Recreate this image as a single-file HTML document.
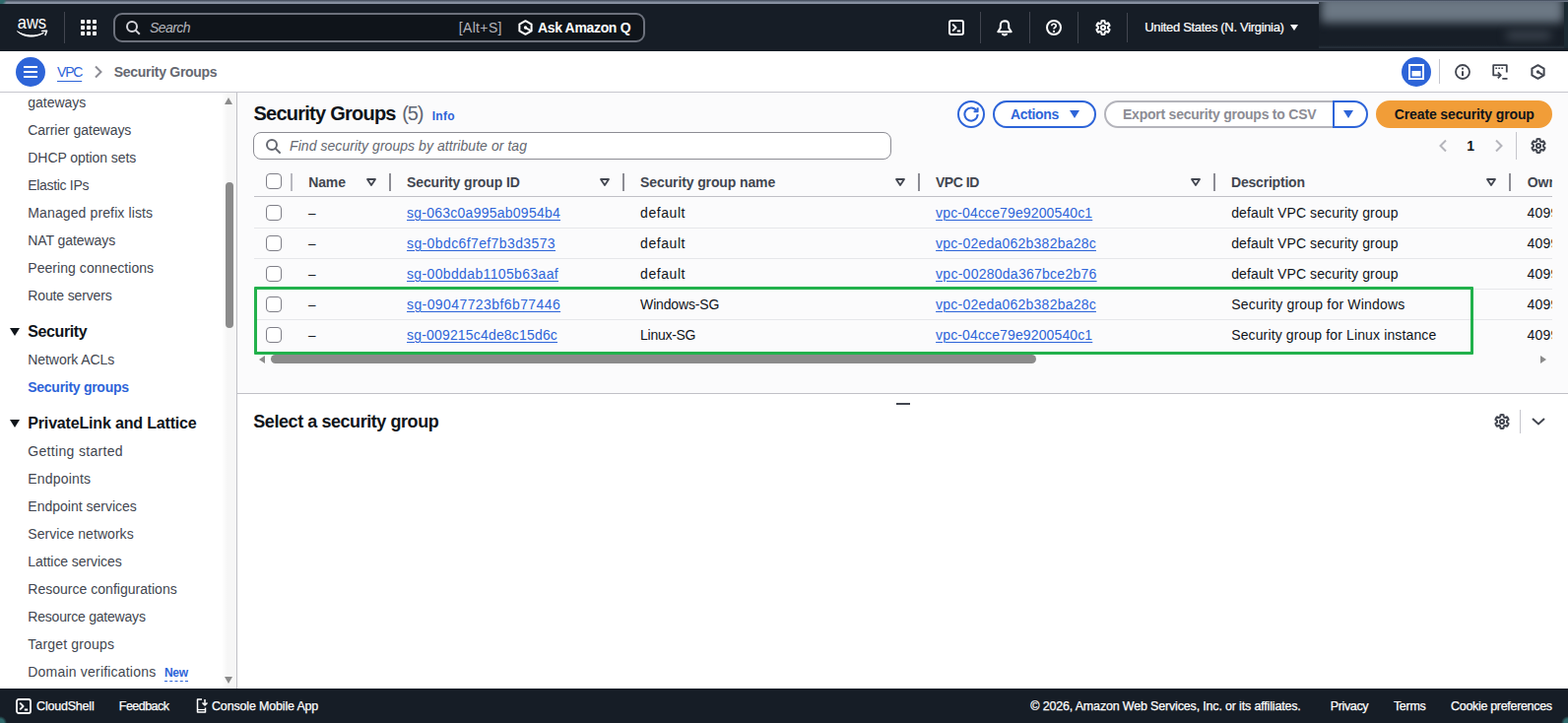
<!DOCTYPE html>
<html lang="en">
<head>
<meta charset="utf-8">
<title>Security Groups | VPC Console</title>
<style>
*{box-sizing:border-box;margin:0;padding:0}
html,body{width:1592px;height:734px;overflow:hidden;background:#fff}
body{font-family:"Liberation Sans",sans-serif;font-size:14px;color:#0f141a;position:relative}
.abs{position:absolute}
.t{position:absolute;white-space:nowrap;line-height:20px;height:20px}
svg{position:absolute;overflow:visible}
a{color:#2d64d8;text-decoration:underline;text-underline-offset:2px;text-decoration-thickness:1px}
#strip{left:0;top:0;width:1592px;height:4px;background:radial-gradient(circle at 0 0,#2f6a6c 0,#2f6a6c 4px,rgba(47,106,108,0) 7px),linear-gradient(#4b5565 0,#4b5565 30%,#8690a0 45%,#8690a0 100%)}
#nav{left:0;top:0;width:1592px;height:52px;background:#161d26;color:#fff}
.nd{position:absolute;top:12px;width:1px;height:32px;background:#424650}
#gsearch{left:115px;top:13px;width:540px;height:30px;border:2px solid #6c717c;border-radius:9px;background:#0f141a}
#acct{left:1339px;top:2px;width:253px;height:47px;background:linear-gradient(#171e27 0,#171e27 44px,#262f39 46px);overflow:hidden}
#acct b{position:absolute;right:0;top:0;width:4px;height:47px;background:#1b2a33}
#acct i{position:absolute;display:block;filter:blur(5px);border-radius:4px}
#crumb{left:0;top:52px;width:1592px;height:42px;background:#fff;border-bottom:1px solid #c6c6cd}
.circ{position:absolute;top:6px;width:30px;height:30px;border-radius:50%;background:#2d64d8}
#side{left:0;top:94px;width:241px;height:605px;background:#fff;border-right:1px solid #c0c0c6;overflow:hidden}
#side .t{color:#424650}
#track{left:225px;top:0;width:15px;height:605px;background:linear-gradient(90deg,#fff,#f6f6f6 40%)}
#thumb{left:229px;top:91px;width:8px;height:148px;background:#8b8b8b;border-radius:4px}
#main{left:241px;top:94px;width:1351px;height:305px;background:#fbfbfc;overflow:hidden}
.btn{position:absolute;top:8px;height:28px;border-radius:14px;border:2px solid #2d64d8;background:#fff}
.cb{position:absolute;width:16px;height:16px;border:1px solid #7f7f88;border-radius:4px;background:#fff}
.hd{position:absolute;width:2px;height:18px;background:#8c8c94}
.rb{position:absolute;left:0;width:1318px;height:1px;background:#e6e7ea}
#clip{left:17px;top:72px;width:1318px;height:196px;overflow:hidden}
#panel{left:241px;top:399px;width:1351px;height:300px;background:#fff;box-shadow:inset 0 1px 0 #c0c0c6}
#foot{left:0;top:699px;width:1592px;height:35px;background:radial-gradient(circle at 0 100%,#2f6a6c 0,#2f6a6c 4px,rgba(47,106,108,0) 7px),radial-gradient(circle at 100% 100%,#2f6a6c 0,#2f6a6c 4px,rgba(47,106,108,0) 7px),#161d26;color:#fff}
#foot .t{-webkit-text-stroke:.25px #fff}
</style>
</head>
<body>
<header id="nav" class="abs">
<div id="strip" class="abs"></div>
<svg style="left:17px;top:17px" width="32" height="22" viewBox="0 0 32 22"><text x="0.7" y="12" textLength="29.4" lengthAdjust="spacingAndGlyphs" font-family="Liberation Sans, sans-serif" font-size="17.9" fill="#fff">aws</text><path d="M0.5 14.8C8 19.8 19 20.3 27.3 16.4C18.5 21.8 7.5 21.3 0.5 14.8Z" fill="#fff" stroke="#fff" stroke-width="1" stroke-linejoin="round"/><path d="M25.8 14.6 30.6 14.2 29 18.6" fill="none" stroke="#fff" stroke-width="1.5" stroke-linejoin="round" stroke-linecap="round"/></svg>
<div class="nd" style="left:65px"></div>
<svg style="left:82px;top:20px" width="16" height="16" viewBox="0 0 16 16" fill="#fff"><rect x="0" y="0" width="4" height="4" rx=".9"/><rect x="6" y="0" width="4" height="4" rx=".9"/><rect x="12" y="0" width="4" height="4" rx=".9"/><rect x="0" y="6" width="4" height="4" rx=".9"/><rect x="6" y="6" width="4" height="4" rx=".9"/><rect x="12" y="6" width="4" height="4" rx=".9"/><rect x="0" y="12" width="4" height="4" rx=".9"/><rect x="6" y="12" width="4" height="4" rx=".9"/><rect x="12" y="12" width="4" height="4" rx=".9"/></svg>
<div id="gsearch" class="abs"></div>
<svg style="left:128px;top:21px" width="15" height="15" viewBox="0 0 15 15" fill="none" stroke="#d4d4da" stroke-width="2"><circle cx="6" cy="6" r="5"/><path d="M9.6 9.6 13.8 13.8"/></svg>
<span class="t" style="left:152px;top:18.15px;letter-spacing:-0.57px;font-style:italic;color:#b4b4bb;">Search</span>
<span class="t" style="left:465.7px;top:18.15px;letter-spacing:0.36px;color:#b4b4bb;">[Alt+S]</span>
<svg style="left:526px;top:20px" width="15" height="16" viewBox="0 0 15 16" fill="none" stroke="#fff" stroke-width="2" stroke-linejoin="round"><path d="M7.5 1.2 13.6 4.6v6.8L7.5 14.8 1.4 11.4V4.6Z"/><path d="M7.5 8 11.8 10.6" stroke-linecap="round"/><circle cx="7.5" cy="8" r="1.7" fill="#fff" stroke="none"/></svg>
<span class="t" style="left:545.9px;top:18.15px;letter-spacing:-0.33px;font-weight:700;color:#fff;">Ask Amazon Q</span>
<svg style="left:963px;top:20px" width="16" height="16" viewBox="0 0 16 16" fill="none" stroke="#fff" stroke-width="2" stroke-linejoin="round"><rect x="1" y="1" width="14" height="14" rx="2"/><path d="M4.2 4.6 7.6 8 4.2 11.4M8.8 11.5h3.4" stroke-width="1.8"/></svg>
<div class="nd" style="left:995px"></div>
<svg style="left:1012px;top:20px" width="16" height="16" viewBox="0 0 16 16" fill="none" stroke="#fff" stroke-width="2" stroke-linejoin="round" stroke-linecap="round"><path d="M8 1.2C5.5 1.2 3.8 3 3.8 5.5V8.3L1.3 12.2H14.7L12.2 8.3V5.5C12.2 3 10.5 1.2 8 1.2Z"/><path d="M6 14.8C7 15.5 9 15.5 10 14.8"/></svg>
<div class="nd" style="left:1045px"></div>
<svg style="left:1062px;top:20px" width="16" height="16" viewBox="0 0 16 16" fill="none" stroke="#fff" stroke-width="2"><circle cx="8" cy="8" r="7"/><path d="M5.8 6.3C5.8 3.6 10.2 3.6 10.2 6.2C10.2 7.8 8 7.8 8 9.6" stroke-width="1.7"/><circle cx="8" cy="11.9" r="1.1" fill="#fff" stroke="none"/></svg>
<div class="nd" style="left:1094px"></div>
<svg style="left:1112px;top:20px" width="16" height="16" viewBox="0 0 16 16" fill="none" stroke="#fff" stroke-width="2" stroke-linejoin="round"><path d="M9.79 3.33L9.55 1.28A6.9 6.9 0 0 0 6.45 1.28L6.21 3.33A5.0 5.0 0 0 0 4.85 4.11L2.95 3.29A6.9 6.9 0 0 0 1.40 5.98L3.06 7.22A5.0 5.0 0 0 0 3.06 8.78L1.40 10.02A6.9 6.9 0 0 0 2.95 12.71L4.85 11.89A5.0 5.0 0 0 0 6.21 12.67L6.45 14.72A6.9 6.9 0 0 0 9.55 14.72L9.79 12.67A5.0 5.0 0 0 0 11.15 11.89L13.05 12.71A6.9 6.9 0 0 0 14.60 10.02L12.94 8.78A5.0 5.0 0 0 0 12.94 7.22L14.60 5.98A6.9 6.9 0 0 0 13.05 3.29L11.15 4.11A5.0 5.0 0 0 0 9.79 3.33Z"/><circle cx="8" cy="8" r="2.1"/></svg>
<div class="nd" style="left:1144px;top:13px;height:30px"></div>
<span class="t" style="left:1162.2px;top:18.3px;font-size:13px;letter-spacing:-0.32px;color:#fff;-webkit-text-stroke:.2px #fff;">United States (N. Virginia)</span>
<div class="abs" style="left:1310px;top:25px;width:0;height:0;border-left:4.3px solid transparent;border-right:4.3px solid transparent;border-top:6.5px solid #fff"></div>
<div id="acct" class="abs"><i style="left:2px;top:-6px;width:246px;height:27px;background:#6c7884"></i><i style="left:190px;top:30px;width:46px;height:8px;background:#3f4752"></i><b></b></div>
</header>
<nav id="crumb" class="abs">
<div class="circ" style="left:16px"></div>
<div class="abs" style="left:24px;top:15px;width:14px;height:2px;background:#fff;box-shadow:0 5px 0 #fff,0 10px 0 #fff"></div>
<a class="t" style="left:58px;top:10.85px;letter-spacing:-1.2px;text-underline-offset:4px;">VPC</a>
<svg style="left:96px;top:15px" width="8" height="12" viewBox="0 0 8 12" fill="none" stroke="#8c8c94" stroke-width="2"><path d="M1 .5 6.5 6 1 11.5"/></svg>
<span class="t" style="left:115.8px;top:10.85px;letter-spacing:-0.29px;font-weight:700;color:#656871;">Security Groups</span>
<div class="circ" style="left:1423px"></div>
<svg style="left:1430px;top:13px" width="16" height="16" viewBox="0 0 16 16" fill="none" stroke="#fff" stroke-width="2" stroke-linejoin="round"><rect x="1" y="1" width="14" height="14" stroke-linejoin="miter"/><rect x="3.5" y="7" width="9" height="5.5" fill="#fff" stroke="none"/></svg>
<div class="abs" style="left:1461px;top:8px;width:1px;height:25px;background:#c6c6cd"></div>
<svg style="left:1477px;top:13px" width="16" height="16" viewBox="0 0 16 16" fill="none" stroke="#424650" stroke-width="1.8"><circle cx="8" cy="8" r="7"/><path d="M8 7.2V12" stroke-width="2"/><circle cx="8" cy="4.7" r="1.1" fill="#424650" stroke="none"/></svg>
<svg style="left:1515px;top:13px" width="16" height="16" viewBox="0 0 16 16" fill="none" stroke="#424650" stroke-width="1.8" stroke-linejoin="round"><path d="M8 11.3H1.2V1.2H14.8V8.5"/><path d="M3.3 4.3h1.8M6.3 4.3h1.8M9.3 4.3h1.8" stroke-width="1.6"/><path d="M5.8 8.3 8.8 11.3 5.8 14.3M10.3 14.8h5.2"/></svg>
<svg style="left:1553.5px;top:13px" width="15" height="16" viewBox="0 0 15 16" fill="none" stroke="#424650" stroke-width="2" stroke-linejoin="round"><path d="M7.5 1.2 13.6 4.6v6.8L7.5 14.8 1.4 11.4V4.6Z"/><path d="M7.5 8 11.8 10.6" stroke-linecap="round"/><circle cx="7.5" cy="8" r="1.7" fill="#424650" stroke="none"/></svg>
</nav>
<aside id="side" class="abs">
<div id="track" class="abs"></div><div id="thumb" class="abs"></div>
<div class="abs" style="left:228px;top:5px;width:0;height:0;border-left:4.5px solid transparent;border-right:4.5px solid transparent;border-bottom:7px solid #8b8b8b"></div>
<div class="abs" style="left:228px;top:593px;width:0;height:0;border-left:4.5px solid transparent;border-right:4.5px solid transparent;border-top:7px solid #8b8b8b"></div>
<span class="t" style="left:28.3px;top:0.35px;letter-spacing:-0.03px;">gateways</span>
<span class="t" style="left:28.3px;top:28.35px;letter-spacing:-0.05px;">Carrier gateways</span>
<span class="t" style="left:28.3px;top:56.35px;letter-spacing:-0.07px;">DHCP option sets</span>
<span class="t" style="left:28.3px;top:84.35px;letter-spacing:-0.32px;">Elastic IPs</span>
<span class="t" style="left:28.3px;top:112.35px;letter-spacing:0.12px;">Managed prefix lists</span>
<span class="t" style="left:28.3px;top:140.35px;letter-spacing:-0.07px;">NAT gateways</span>
<span class="t" style="left:28.3px;top:168.35px;letter-spacing:0.05px;">Peering connections</span>
<span class="t" style="left:28.3px;top:196.35px;letter-spacing:-0.14px;">Route servers</span>
<div class="abs" style="left:10px;top:239px;width:0;height:0;border-left:5px solid transparent;border-right:5px solid transparent;border-top:8.5px solid #0f141a"></div>
<span class="t" style="left:28.3px;top:232.86px;font-size:16px;letter-spacing:-0.39px;font-weight:700;color:#0f141a;">Security</span>
<span class="t" style="left:28.3px;top:261.45px;letter-spacing:-0.07px;">Network ACLs</span>
<span class="t" style="left:28.3px;top:289.35px;letter-spacing:-0.28px;font-weight:700;color:#2d64d8;">Security groups</span>
<div class="abs" style="left:10px;top:332px;width:0;height:0;border-left:5px solid transparent;border-right:5px solid transparent;border-top:8.5px solid #0f141a"></div>
<span class="t" style="left:28.3px;top:325.66px;font-size:16px;letter-spacing:-0.17px;font-weight:700;color:#0f141a;">PrivateLink and Lattice</span>
<span class="t" style="left:28.3px;top:354.35px;letter-spacing:0.32px;">Getting started</span>
<span class="t" style="left:28.3px;top:382.35px;letter-spacing:0.18px;">Endpoints</span>
<span class="t" style="left:28.3px;top:410.35px;">Endpoint services</span>
<span class="t" style="left:28.3px;top:438.35px;letter-spacing:0.05px;">Service networks</span>
<span class="t" style="left:28.3px;top:466.35px;letter-spacing:-0.07px;">Lattice services</span>
<span class="t" style="left:28.3px;top:494.35px;letter-spacing:0.02px;">Resource configurations</span>
<span class="t" style="left:28.3px;top:522.35px;letter-spacing:-0.21px;">Resource gateways</span>
<span class="t" style="left:28.3px;top:550.35px;letter-spacing:0.17px;">Target groups</span>
<span class="t" style="left:28.3px;top:578.35px;letter-spacing:0.2px;">Domain verifications</span>
<span class="t" style="left:167px;top:578.64px;font-size:12px;letter-spacing:-0.34px;font-weight:700;color:#2d64d8;border-bottom:1px dashed #2d64d8;height:19px;">New</span>
</aside>
<main id="main" class="abs">
<span class="t" style="left:16.5px;top:9.37px;font-size:20px;letter-spacing:-0.76px;line-height:24px;height:24px;font-weight:700;">Security Groups</span>
<span class="t" style="left:167.3px;top:9.37px;font-size:20px;letter-spacing:-1.2px;line-height:24px;height:24px;color:#5f6673;">(5)</span>
<span class="t" style="left:197.7px;top:13.84px;font-size:12px;letter-spacing:0.27px;font-weight:700;color:#2d64d8;">Info</span>
<div class="btn" style="left:731px;width:28px"></div>
<svg style="left:737px;top:14px" width="16" height="16" viewBox="0 0 16 16" fill="none" stroke="#2d64d8" stroke-width="2" stroke-linejoin="round"><path d="M14.6 8A6.6 6.6 0 1 1 13.6 4.5"/><path d="M14.6 1.200V5.200H10.6"/></svg>
<div class="btn" style="left:767px;width:105px"></div>
<span class="t" style="left:785px;top:11.85px;letter-spacing:-0.34px;font-weight:700;color:#2d64d8;">Actions</span>
<div class="abs" style="left:845px;top:18.4px;width:0;height:0;border-left:5px solid transparent;border-right:5px solid transparent;border-top:8px solid #2d64d8"></div>
<div class="btn" style="left:880px;width:234px;border-color:#b4b4bb;border-radius:14px 0 0 14px"></div>
<span class="t" style="left:899px;top:11.85px;letter-spacing:-0.23px;font-weight:700;color:#8c8c94;">Export security groups to CSV</span>
<div class="btn" style="left:1112px;width:36px;border-radius:0 14px 14px 0"></div>
<div class="abs" style="left:1123.2px;top:18.4px;width:0;height:0;border-left:5px solid transparent;border-right:5px solid transparent;border-top:8px solid #2d64d8"></div>
<div class="btn" style="left:1156px;width:179px;border-color:#f19d38;background:#f19d38"></div>
<span class="t" style="left:1174.8px;top:11.85px;letter-spacing:-0.13px;font-weight:700;color:#0f141a;">Create security group</span>
<div class="abs" style="left:16px;top:40px;width:648px;height:28px;border:1px solid #8c8c94;border-radius:8px;background:#fff"></div>
<svg style="left:29px;top:47px" width="15" height="15" viewBox="0 0 15 15" fill="none" stroke="#656871" stroke-width="2"><circle cx="6" cy="6" r="5"/><path d="M9.6 9.6 14 14" stroke-linecap="round"/></svg>
<span class="t" style="left:53.1px;top:44.45px;letter-spacing:0.05px;font-style:italic;color:#656871;">Find security groups by attribute or tag</span>
<svg style="left:1220px;top:48px" width="8" height="12" viewBox="0 0 8 12" fill="none" stroke="#b4b4bb" stroke-width="2"><path d="M7 .5 1.5 6 7 11.5"/></svg>
<span class="t" style="left:1248.3px;top:44.15px;font-weight:700;color:#0f141a;">1</span>
<svg style="left:1276.5px;top:48px" width="8" height="12" viewBox="0 0 8 12" fill="none" stroke="#b4b4bb" stroke-width="2"><path d="M1 .5 6.5 6 1 11.5"/></svg>
<div class="abs" style="left:1298px;top:40px;width:1px;height:28px;background:#c6c6cd"></div>
<svg style="left:1313px;top:46px" width="16" height="16" viewBox="0 0 16 16" fill="none" stroke="#424650" stroke-width="2" stroke-linejoin="round"><path d="M9.79 3.33L9.55 1.28A6.9 6.9 0 0 0 6.45 1.28L6.21 3.33A5.0 5.0 0 0 0 4.85 4.11L2.95 3.29A6.9 6.9 0 0 0 1.40 5.98L3.06 7.22A5.0 5.0 0 0 0 3.06 8.78L1.40 10.02A6.9 6.9 0 0 0 2.95 12.71L4.85 11.89A5.0 5.0 0 0 0 6.21 12.67L6.45 14.72A6.9 6.9 0 0 0 9.55 14.72L9.79 12.67A5.0 5.0 0 0 0 11.15 11.89L13.05 12.71A6.9 6.9 0 0 0 14.60 10.02L12.94 8.78A5.0 5.0 0 0 0 12.94 7.22L14.60 5.98A6.9 6.9 0 0 0 13.05 3.29L11.15 4.11A5.0 5.0 0 0 0 9.79 3.33Z"/><circle cx="8" cy="8" r="2.1"/></svg>
<div id="clip" class="abs">
<div class="cb" style="left:12px;top:10px"></div>
<span class="t" style="left:55.2px;top:8.95px;letter-spacing:-0.11px;font-weight:700;color:#424650;">Name</span>
<svg style="left:114px;top:15.3px" width="10" height="8" viewBox="0 0 10 8" fill="none" stroke="#424650" stroke-width="1.8" stroke-linejoin="round"><path d="M1 1h8L5 7Z"/></svg>
<span class="t" style="left:155px;top:8.95px;letter-spacing:-0.12px;font-weight:700;color:#424650;">Security group ID</span>
<svg style="left:351px;top:15.3px" width="10" height="8" viewBox="0 0 10 8" fill="none" stroke="#424650" stroke-width="1.8" stroke-linejoin="round"><path d="M1 1h8L5 7Z"/></svg>
<span class="t" style="left:392.1px;top:8.95px;letter-spacing:-0.12px;font-weight:700;color:#424650;">Security group name</span>
<svg style="left:650.8px;top:15.3px" width="10" height="8" viewBox="0 0 10 8" fill="none" stroke="#424650" stroke-width="1.8" stroke-linejoin="round"><path d="M1 1h8L5 7Z"/></svg>
<span class="t" style="left:692px;top:8.95px;letter-spacing:-0.48px;font-weight:700;color:#424650;">VPC ID</span>
<svg style="left:950.8px;top:15.3px" width="10" height="8" viewBox="0 0 10 8" fill="none" stroke="#424650" stroke-width="1.8" stroke-linejoin="round"><path d="M1 1h8L5 7Z"/></svg>
<span class="t" style="left:992px;top:8.95px;letter-spacing:-0.2px;font-weight:700;color:#424650;">Description</span>
<svg style="left:1251px;top:15.3px" width="10" height="8" viewBox="0 0 10 8" fill="none" stroke="#424650" stroke-width="1.8" stroke-linejoin="round"><path d="M1 1h8L5 7Z"/></svg>
<span class="t" style="left:1292.7px;top:8.95px;font-weight:700;color:#424650;">Owner</span>
<div class="hd" style="left:37px;top:10px;background:#b9b9c0"></div>
<div class="hd" style="left:137px;top:10px"></div>
<div class="hd" style="left:374px;top:10px"></div>
<div class="hd" style="left:674px;top:10px"></div>
<div class="hd" style="left:974px;top:10px"></div>
<div class="hd" style="left:1274px;top:10px"></div>
<div class="rb" style="top:33px;background:#c0c0c6"></div>
<div class="cb" style="left:12px;top:42px"></div>
<span class="t" style="left:55.2px;top:41.33px;font-size:12.6px;-webkit-text-stroke:.3px #0f141a;">–</span>
<a class="t" style="left:155px;top:39.85px;letter-spacing:0.25px;">sg-063c0a995ab0954b4</a>
<span class="t" style="left:392.1px;top:39.85px;letter-spacing:0.56px;">default</span>
<a class="t" style="left:692.1px;top:39.85px;letter-spacing:0.13px;">vpc-04cce79e9200540c1</a>
<span class="t" style="left:992.2px;top:39.85px;letter-spacing:0.11px;">default VPC security group</span>
<span class="t" style="left:1292.4px;top:39.85px;letter-spacing:.25px;">4099</span>
<div class="rb" style="top:65px"></div>
<div class="cb" style="left:12px;top:73px"></div>
<span class="t" style="left:55.2px;top:72.33px;font-size:12.6px;-webkit-text-stroke:.3px #0f141a;">–</span>
<a class="t" style="left:155px;top:70.85px;letter-spacing:0.39px;">sg-0bdc6f7ef7b3d3573</a>
<span class="t" style="left:392.1px;top:70.85px;letter-spacing:0.56px;">default</span>
<a class="t" style="left:692.1px;top:70.85px;letter-spacing:0.23px;">vpc-02eda062b382ba28c</a>
<span class="t" style="left:992.2px;top:70.85px;letter-spacing:0.11px;">default VPC security group</span>
<span class="t" style="left:1292.4px;top:70.85px;letter-spacing:.25px;">4099</span>
<div class="rb" style="top:96px"></div>
<div class="cb" style="left:12px;top:104px"></div>
<span class="t" style="left:55.2px;top:103.33px;font-size:12.6px;-webkit-text-stroke:.3px #0f141a;">–</span>
<a class="t" style="left:155px;top:101.85px;letter-spacing:0.36px;">sg-00bddab1105b63aaf</a>
<span class="t" style="left:392.1px;top:101.85px;letter-spacing:0.56px;">default</span>
<a class="t" style="left:692.1px;top:101.85px;letter-spacing:0.26px;">vpc-00280da367bce2b76</a>
<span class="t" style="left:992.2px;top:101.85px;letter-spacing:0.11px;">default VPC security group</span>
<span class="t" style="left:1292.4px;top:101.85px;letter-spacing:.25px;">4099</span>
<div class="rb" style="top:127px"></div>
<div class="cb" style="left:12px;top:135px"></div>
<span class="t" style="left:55.2px;top:134.33px;font-size:12.6px;-webkit-text-stroke:.3px #0f141a;">–</span>
<a class="t" style="left:155px;top:132.85px;letter-spacing:0.41px;">sg-09047723bf6b77446</a>
<span class="t" style="left:392.1px;top:132.85px;letter-spacing:-0.16px;">Windows-SG</span>
<a class="t" style="left:692.1px;top:132.85px;letter-spacing:0.23px;">vpc-02eda062b382ba28c</a>
<span class="t" style="left:992.2px;top:132.85px;letter-spacing:0.2px;">Security group for Windows</span>
<span class="t" style="left:1292.4px;top:132.85px;letter-spacing:.25px;">4099</span>
<div class="rb" style="top:158px"></div>
<div class="cb" style="left:12px;top:166px"></div>
<span class="t" style="left:55.2px;top:165.33px;font-size:12.6px;-webkit-text-stroke:.3px #0f141a;">–</span>
<a class="t" style="left:155px;top:163.85px;letter-spacing:0.18px;">sg-009215c4de8c15d6c</a>
<span class="t" style="left:392.1px;top:163.85px;letter-spacing:-0.28px;">Linux-SG</span>
<a class="t" style="left:692.1px;top:163.85px;letter-spacing:0.13px;">vpc-04cce79e9200540c1</a>
<span class="t" style="left:992.2px;top:163.85px;letter-spacing:0.13px;">Security group for Linux instance</span>
<span class="t" style="left:1292.4px;top:163.85px;letter-spacing:.25px;">4099</span>
</div>
<div class="abs" style="left:17px;top:197px;width:1238px;height:69px;border:3px solid #22b14c;border-radius:1px"></div>
<div class="abs" style="left:22px;top:266.5px;width:0;height:0;border-top:4.5px solid transparent;border-bottom:4.5px solid transparent;border-right:6px solid #8b8b8b"></div>
<div class="abs" style="left:34px;top:266px;width:777px;height:9px;border-radius:4.5px;background:#8b8b8b"></div>
<div class="abs" style="left:1323px;top:266.5px;width:0;height:0;border-top:4.5px solid transparent;border-bottom:4.5px solid transparent;border-left:6px solid #8b8b8b"></div>
</main>
<section id="panel" class="abs">
<div class="abs" style="left:669px;top:10px;width:14px;height:2px;background:#424650"></div>
<span class="t" style="left:16.3px;top:17.76px;font-size:18px;letter-spacing:-0.44px;line-height:22px;height:22px;font-weight:700;">Select a security group</span>
<svg style="left:1276px;top:21px" width="16" height="16" viewBox="0 0 16 16" fill="none" stroke="#424650" stroke-width="2" stroke-linejoin="round"><path d="M9.79 3.33L9.55 1.28A6.9 6.9 0 0 0 6.45 1.28L6.21 3.33A5.0 5.0 0 0 0 4.85 4.11L2.95 3.29A6.9 6.9 0 0 0 1.40 5.98L3.06 7.22A5.0 5.0 0 0 0 3.06 8.78L1.40 10.02A6.9 6.9 0 0 0 2.95 12.71L4.85 11.89A5.0 5.0 0 0 0 6.21 12.67L6.45 14.72A6.9 6.9 0 0 0 9.55 14.72L9.79 12.67A5.0 5.0 0 0 0 11.15 11.89L13.05 12.71A6.9 6.9 0 0 0 14.60 10.02L12.94 8.78A5.0 5.0 0 0 0 12.94 7.22L14.60 5.98A6.9 6.9 0 0 0 13.05 3.29L11.15 4.11A5.0 5.0 0 0 0 9.79 3.33Z"/><circle cx="8" cy="8" r="2.1"/></svg>
<div class="abs" style="left:1302px;top:17px;width:1px;height:24px;background:#c6c6cd"></div>
<svg style="left:1314px;top:25px" width="14" height="8" viewBox="0 0 14 8" fill="none" stroke="#424650" stroke-width="2"><path d="M1 1 7 6.5 13 1"/></svg>
</section>
<footer id="foot" class="abs">
<svg style="left:16px;top:10px" width="16" height="16" viewBox="0 0 16 16" fill="none" stroke="#fff" stroke-width="1.8" stroke-linejoin="round"><rect x="1" y="1" width="14" height="14" rx="2"/><path d="M4.2 4.6 7.6 8 4.2 11.4M8.8 11.5h3.4" stroke-width="1.8"/></svg>
<span class="t" style="left:37.1px;top:8.07px;font-size:12.5px;letter-spacing:-0.21px;">CloudShell</span>
<span class="t" style="left:120.8px;top:8.07px;font-size:12.5px;letter-spacing:-0.53px;">Feedback</span>
<svg style="left:198.5px;top:9.5px" width="12" height="15" viewBox="0 0 12 15" fill="none" stroke="#fff" stroke-width="1.5" stroke-linejoin="round"><path d="M6 1H1.5V14H9.5V9.5"/><path d="M1.5 11.5H9.5" stroke-width="1.2"/><path d="M9 1V6.5M6.5 4.5 9 7 11.5 4.5"/></svg>
<span class="t" style="left:215px;top:8.07px;font-size:12.5px;letter-spacing:-0.17px;">Console Mobile App</span>
<span class="t" style="left:1046.3px;top:8.07px;font-size:12.5px;letter-spacing:-0.17px;">© 2026, Amazon Web Services, Inc. or its affiliates.</span>
<span class="t" style="left:1350.7px;top:8.07px;font-size:12.5px;letter-spacing:-0.35px;">Privacy</span>
<span class="t" style="left:1414.9px;top:8.07px;font-size:12.5px;letter-spacing:-0.28px;">Terms</span>
<span class="t" style="left:1473.1px;top:8.07px;font-size:12.5px;letter-spacing:-0.32px;">Cookie preferences</span>
</footer>
</body>
</html>
